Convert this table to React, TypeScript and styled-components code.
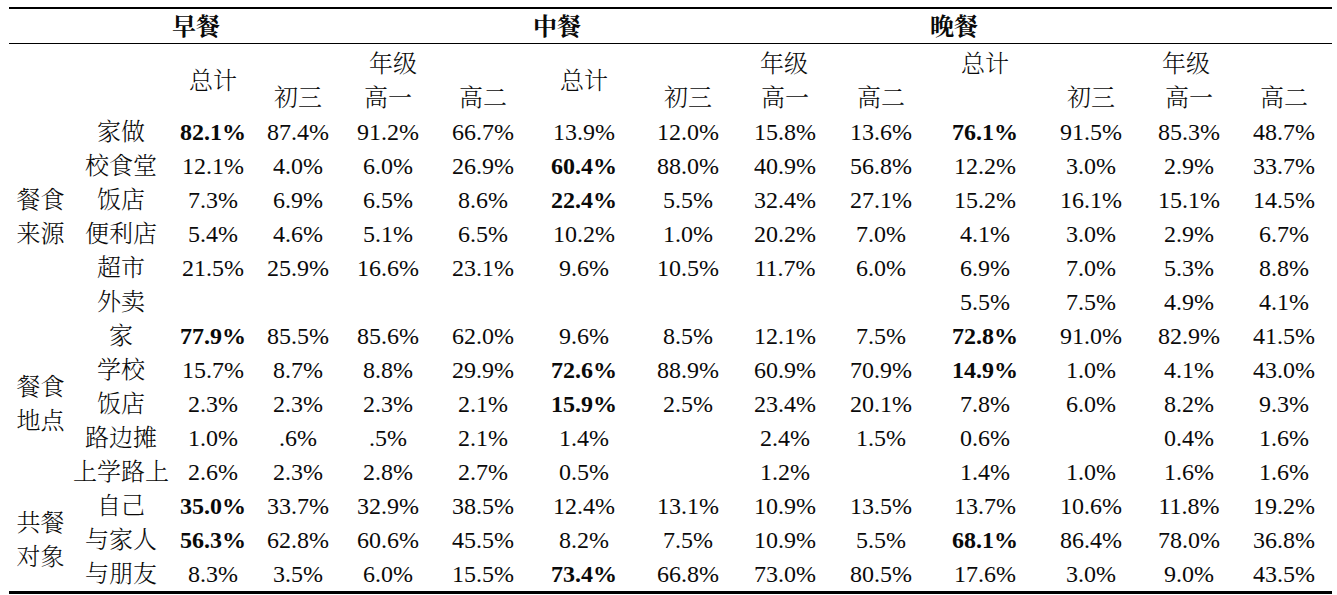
import React from "react";
import styled, { createGlobalStyle } from "styled-components";

const GlobalStyle = createGlobalStyle`
  html, body {
    margin: 0;
    padding: 0;
    background: #ffffff;
  }
  body {
    font-family: "Liberation Serif", "Times New Roman", "Noto Serif CJK SC", "Noto Sans CJK SC", serif;
    color: #000000;
  }
`;

const Page = styled.div`
  padding: 7px 0 0 9px;
`;

const Table = styled.table`
  width: 1323px;
  table-layout: fixed;
  border-collapse: separate;
  border-spacing: 0;
  border-top: 2px solid #000;
  border-bottom: 3px solid #000;
  font-family: "Liberation Serif", "Times New Roman", "Noto Serif CJK SC", "Noto Sans CJK SC", serif;
  font-size: 24px;
  color: #0a0a0a;
`;

const GroupTh = styled.th<{ $pad?: number }>`
  height: 31px;
  padding: 3px 0 0 ${(p) => p.$pad ?? 2}px;
  line-height: 31px;
  text-align: left;
  font-weight: 700;
  border-bottom: 1px solid #000;
  white-space: nowrap;
`;

const HeadTh = styled.th<{ $top?: boolean }>`
  padding: ${(p) => (p.$top ? "3px 0 0" : "0")};
  line-height: 34px;
  font-weight: 300;
  text-align: center;
  vertical-align: middle;
  white-space: nowrap;
`;

const GroupLabel = styled.td`
  padding: 0;
  line-height: 34px;
  font-weight: 300;
  text-align: center;
  vertical-align: middle;
  white-space: nowrap;
`;

const ItemLabel = styled.td`
  padding: 0;
  line-height: 34px;
  font-weight: 300;
  text-align: center;
  white-space: nowrap;
`;

const Cell = styled.td<{ $bold?: boolean }>`
  padding: 0;
  height: 34px;
  line-height: 34px;
  text-align: center;
  white-space: nowrap;
  font-weight: ${(p) => (p.$bold ? 700 : 400)};
`;

const colWidths = [63, 98, 86, 84, 96, 94, 108, 100, 94, 98, 110, 102, 94, 96];

type Row = { label: string; values: string[]; bold?: number[] };

const groups: { name: string[]; rows: Row[] }[] = [
  {
    name: ["餐食", "来源"],
    rows: [
      { label: "家做", values: ["82.1%", "87.4%", "91.2%", "66.7%", "13.9%", "12.0%", "15.8%", "13.6%", "76.1%", "91.5%", "85.3%", "48.7%"], bold: [0, 8] },
      { label: "校食堂", values: ["12.1%", "4.0%", "6.0%", "26.9%", "60.4%", "88.0%", "40.9%", "56.8%", "12.2%", "3.0%", "2.9%", "33.7%"], bold: [4] },
      { label: "饭店", values: ["7.3%", "6.9%", "6.5%", "8.6%", "22.4%", "5.5%", "32.4%", "27.1%", "15.2%", "16.1%", "15.1%", "14.5%"], bold: [4] },
      { label: "便利店", values: ["5.4%", "4.6%", "5.1%", "6.5%", "10.2%", "1.0%", "20.2%", "7.0%", "4.1%", "3.0%", "2.9%", "6.7%"] },
      { label: "超市", values: ["21.5%", "25.9%", "16.6%", "23.1%", "9.6%", "10.5%", "11.7%", "6.0%", "6.9%", "7.0%", "5.3%", "8.8%"] },
      { label: "外卖", values: ["", "", "", "", "", "", "", "", "5.5%", "7.5%", "4.9%", "4.1%"] },
    ],
  },
  {
    name: ["餐食", "地点"],
    rows: [
      { label: "家", values: ["77.9%", "85.5%", "85.6%", "62.0%", "9.6%", "8.5%", "12.1%", "7.5%", "72.8%", "91.0%", "82.9%", "41.5%"], bold: [0, 8] },
      { label: "学校", values: ["15.7%", "8.7%", "8.8%", "29.9%", "72.6%", "88.9%", "60.9%", "70.9%", "14.9%", "1.0%", "4.1%", "43.0%"], bold: [4, 8] },
      { label: "饭店", values: ["2.3%", "2.3%", "2.3%", "2.1%", "15.9%", "2.5%", "23.4%", "20.1%", "7.8%", "6.0%", "8.2%", "9.3%"], bold: [4] },
      { label: "路边摊", values: ["1.0%", ".6%", ".5%", "2.1%", "1.4%", "", "2.4%", "1.5%", "0.6%", "", "0.4%", "1.6%"] },
      { label: "上学路上", values: ["2.6%", "2.3%", "2.8%", "2.7%", "0.5%", "", "1.2%", "", "1.4%", "1.0%", "1.6%", "1.6%"] },
    ],
  },
  {
    name: ["共餐", "对象"],
    rows: [
      { label: "自己", values: ["35.0%", "33.7%", "32.9%", "38.5%", "12.4%", "13.1%", "10.9%", "13.5%", "13.7%", "10.6%", "11.8%", "19.2%"], bold: [0] },
      { label: "与家人", values: ["56.3%", "62.8%", "60.6%", "45.5%", "8.2%", "7.5%", "10.9%", "5.5%", "68.1%", "86.4%", "78.0%", "36.8%"], bold: [0, 8] },
      { label: "与朋友", values: ["8.3%", "3.5%", "6.0%", "15.5%", "73.4%", "66.8%", "73.0%", "80.5%", "17.6%", "3.0%", "9.0%", "43.5%"], bold: [4] },
    ],
  },
];

export default function App() {
  return (
    <>
      <GlobalStyle />
      <Page>
        <Table>
          <colgroup>
            {colWidths.map((w, i) => (
              <col key={i} style={{ width: w }} />
            ))}
          </colgroup>
          <thead>
            <tr>
              <GroupTh colSpan={2} />
              <GroupTh colSpan={4}>早餐</GroupTh>
              <GroupTh colSpan={4} $pad={3}>中餐</GroupTh>
              <GroupTh colSpan={4} $pad={0}>晚餐</GroupTh>
            </tr>
            <tr>
              <HeadTh $top colSpan={2} rowSpan={2} />
              <HeadTh $top rowSpan={2}>总计</HeadTh>
              <HeadTh $top colSpan={3}>年级</HeadTh>
              <HeadTh $top rowSpan={2}>总计</HeadTh>
              <HeadTh $top colSpan={3}>年级</HeadTh>
              <HeadTh $top>总计</HeadTh>
              <HeadTh $top colSpan={3}>年级</HeadTh>
            </tr>
            <tr>
              <HeadTh>初三</HeadTh>
              <HeadTh>高一</HeadTh>
              <HeadTh>高二</HeadTh>
              <HeadTh>初三</HeadTh>
              <HeadTh>高一</HeadTh>
              <HeadTh>高二</HeadTh>
              <HeadTh />
              <HeadTh>初三</HeadTh>
              <HeadTh>高一</HeadTh>
              <HeadTh>高二</HeadTh>
            </tr>
          </thead>
          <tbody>
            {groups.map((g) =>
              g.rows.map((r, ri) => (
                <tr key={g.name.join("") + r.label}>
                  {ri === 0 && (
                    <GroupLabel rowSpan={g.rows.length}>
                      {g.name[0]}
                      <br />
                      {g.name[1]}
                    </GroupLabel>
                  )}
                  <ItemLabel>{r.label}</ItemLabel>
                  {r.values.map((v, vi) => (
                    <Cell key={vi} $bold={r.bold?.includes(vi)}>
                      {v}
                    </Cell>
                  ))}
                </tr>
              ))
            )}
          </tbody>
        </Table>
      </Page>
    </>
  );
}
